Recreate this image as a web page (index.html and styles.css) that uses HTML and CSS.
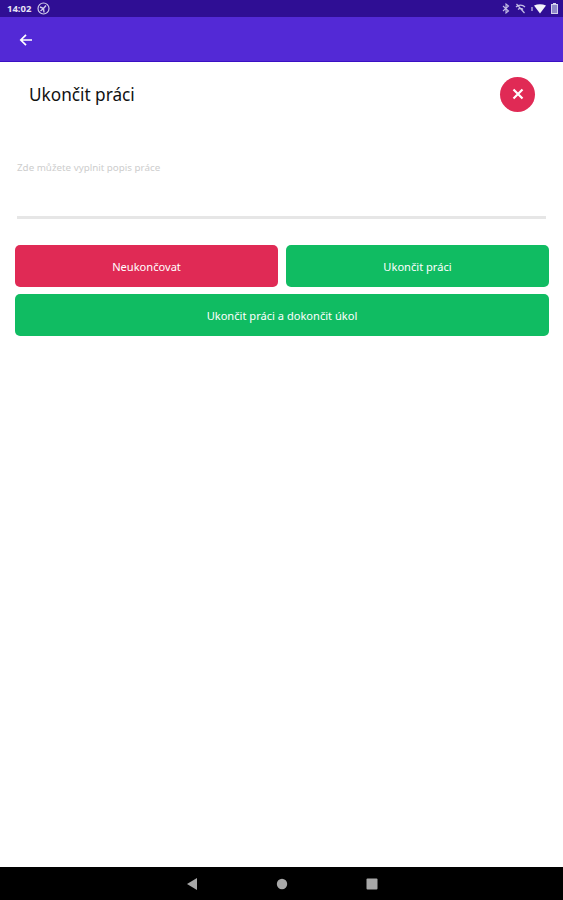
FILE: index.html
```html
<!DOCTYPE html>
<html lang="cs">
<head>
    <meta charset="UTF-8">
    <meta name="viewport" content="width=device-width, initial-scale=1.0">
    <title>Ukončit práci</title>
    <link rel="stylesheet" href="styles.css">
</head>
<body>
    <div class="status-bar">
        <div class="status-left">
            <span class="clock">14:02</span>
            <svg class="status-app" width="13" height="13" viewBox="0 0 13 13">
                <circle cx="6.500" cy="6.500" r="5.500" fill="none" stroke="#cfcaea" stroke-width="1.200"/>
                <path d="M3 5l3.500 1.500L9 3.500M6.500 6.500l.5 4M6.500 6.500L3.500 9" fill="none" stroke="#cfcaea" stroke-width="1.400"/>
            </svg>
        </div>
        <div class="status-right">
            <svg width="8" height="11" viewBox="0 0 8 11">
                <path d="M1 3l5.500 5L4 10V1l2.500 2L1 8" fill="none" stroke="#c4bee6" stroke-width="1.100"/>
            </svg>
            <svg width="11" height="11" viewBox="0 0 11 11">
                <path d="M1 4a6.500 6.500 0 0 1 9 0M3 6.500a3.500 3.500 0 0 1 5 0M1.500 1l8 9" fill="none" stroke="#c4bee6" stroke-width="1.200"/>
            </svg>
            <svg width="15" height="10" viewBox="0 0 15 10">
                <path d="M1 3v4" stroke="#e8e6f6" stroke-width="1"/>
                <path d="M3 1.500Q9-1 15 1.500L9 9.500Z" fill="#f4f3fb"/>
            </svg>
            <svg width="7" height="11" viewBox="0 0 7 11">
                <rect x="0.500" y="1.500" width="6" height="9" fill="#8f88c8" stroke="#d4d0ec"/>
                <rect x="2" y="0" width="3" height="1.500" fill="#d4d0ec"/>
            </svg>
        </div>
    </div>

    <header class="app-bar">
        <svg class="back-icon" width="14" height="14" viewBox="0 0 14 14">
            <path d="M13 7H2M7 1.800 1.800 7 7 12.200" fill="none" stroke="#fff" stroke-width="1.700"/>
        </svg>
    </header>

    <main class="content">
        <div class="title-row">
            <h1>Ukončit práci</h1>
            <button class="close-btn" aria-label="Zavřít">
                <svg width="12" height="12" viewBox="0 0 12 12">
                    <path d="M1.500 1.500l9 9M10.500 1.500l-9 9" stroke="#fff" stroke-width="2.200"/>
                </svg>
            </button>
        </div>

        <div class="field">
            <label class="field-label" for="popis">Zde můžete vyplnit popis práce</label>
            <textarea id="popis" class="field-input" rows="1"></textarea>
        </div>

        <div class="actions">
            <div class="actions-row">
                <button class="btn btn-red">Neukončovat</button>
                <button class="btn btn-green">Ukončit práci</button>
            </div>
            <button class="btn btn-green">Ukončit práci a dokončit úkol</button>
        </div>
    </main>

    <nav class="nav-bar">
        <svg width="12" height="14" viewBox="0 0 12 14"><path d="M11 1v12L1 7z" fill="#a8a8a8"/></svg>
        <svg width="12" height="12" viewBox="0 0 12 12"><circle cx="6" cy="6" r="5.200" fill="#a8a8a8"/></svg>
        <svg width="12" height="12" viewBox="0 0 12 12"><rect x="0.500" y="0.500" width="11" height="11" rx="1" fill="#a8a8a8"/></svg>
    </nav>
</body>
</html>
```

FILE: styles.css
```css
html, body {
    height: 100%;
}

body {
    font-family: "Noto Sans", "Open Sans", sans-serif;
    margin: 0;
    display: flex;
    flex-direction: column;
    background-color: #fff;
}

.status-bar {
    height: 17px;
    padding: 0 5px 0 7px;
    display: flex;
    align-items: center;
    justify-content: space-between;
    background-color: #2f0e94;
    color: #e6e3f5;
}

.status-left,
.status-right {
    display: flex;
    align-items: center;
}

.status-left {
    gap: 6px;
}

.status-right {
    gap: 5px;
}

.clock {
    font-size: 9.500px;
    font-weight: 700;
}

.app-bar {
    height: 45px;
    padding: 1px 0 0 19px;
    box-sizing: border-box;
    display: flex;
    align-items: center;
    background-color: #5329d6;
    border-bottom: 1px solid #3a10c4;
}

.content {
    flex: 1;
    padding: 0 14px 0 15px;
}

.title-row {
    height: 64px;
    padding: 0 14px;
    display: flex;
    align-items: center;
    justify-content: space-between;
}

h1 {
    margin: 0;
    font-size: 17.200px;
    font-weight: 400;
    color: #111;
}

.close-btn {
    width: 35px;
    height: 35px;
    padding: 0;
    display: flex;
    align-items: center;
    justify-content: center;
    border: none;
    border-radius: 50%;
    background-color: #e02a55;
}

.field {
    padding: 0 3px 0 2px;
    margin-top: 35px;
}

.field-label {
    display: block;
    font-size: 9.800px;
    line-height: 14px;
    color: #cdcdcd;
}

.field-input {
    display: block;
    width: 100%;
    height: 44px;
    padding: 0;
    box-sizing: border-box;
    border: none;
    border-bottom: 3px solid #e6e6e6;
    resize: none;
    outline: none;
    background: transparent;
}

.actions {
    margin-top: 26px;
    display: flex;
    flex-direction: column;
    gap: 7px;
}

.actions-row {
    display: flex;
    gap: 8px;
}

.actions-row .btn {
    flex: 1;
}

.btn {
    height: 42px;
    padding: 0;
    border: none;
    border-radius: 5px;
    font-family: inherit;
    font-size: 11.100px;
    color: #fff;
}

.btn-red {
    background-color: #e02a55;
}

.btn-green {
    background-color: #10bc62;
}

.nav-bar {
    height: 33px;
    display: flex;
    align-items: center;
    justify-content: center;
    gap: 78px;
    background-color: #000;
}
```
